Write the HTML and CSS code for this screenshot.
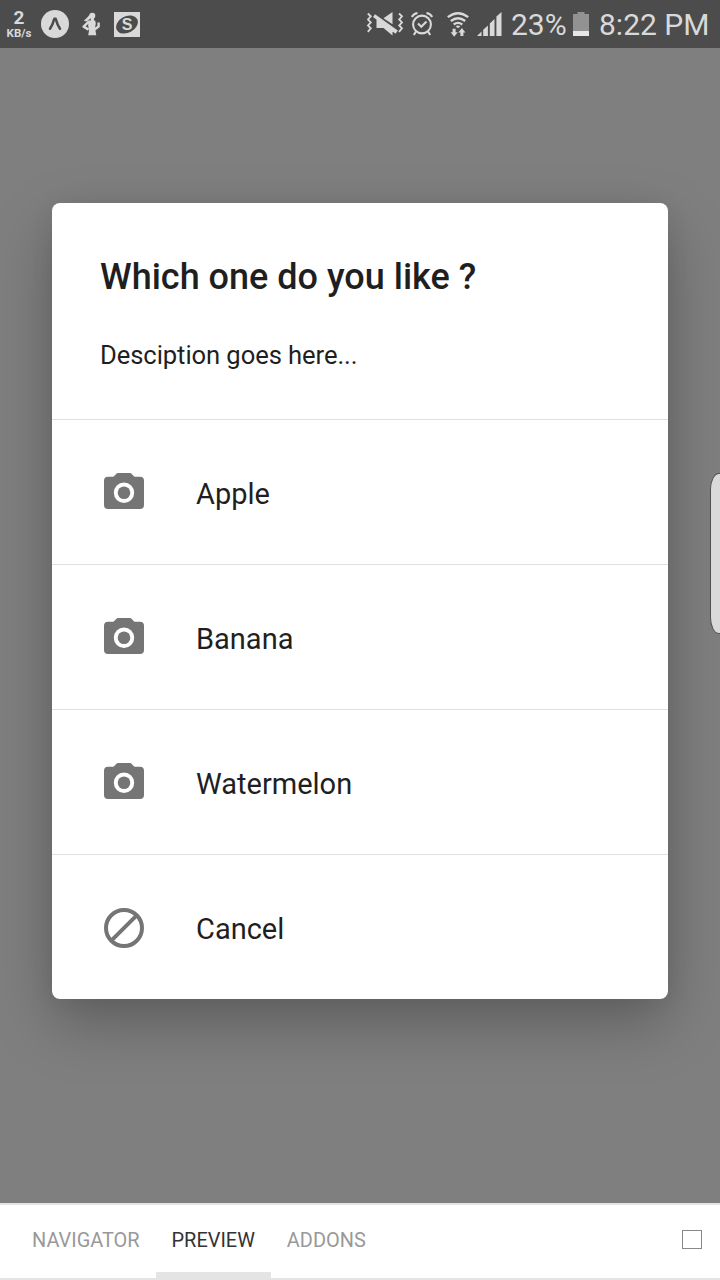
FILE: index.html
```
<!DOCTYPE html>
<html lang="en">
<head>
<meta charset="utf-8">
<title>Preview</title>
<link rel="stylesheet" href="styles.css">
</head>
<body>
<svg class="defs" aria-hidden="true">
  <symbol id="camera" viewBox="0 0 40 36">
    <path fill-rule="evenodd" d="M14 0h12c2 0 3.200 3.800 5.500 3.800H36a4 4 0 0 1 4 4V32a4 4 0 0 1-4 4H4a4 4 0 0 1-4-4V7.800a4 4 0 0 1 4-4h4.500C10.800 3.800 12 0 14 0zM20 9.600a10.200 10.200 0 1 0 0 20.400 10.200 10.200 0 0 0 0-20.400z"/>
    <circle cx="20" cy="19.800" r="6.300"/>
  </symbol>
</svg>
<div class="screen">
  <header class="status">
    <div class="status-left">
      <div class="rate"><b>2</b><span>KB/s</span></div>
      <svg class="expo" width="28" height="28" viewBox="0 0 28 28"><circle cx="14" cy="14" r="14" fill="#d9d9d9"/><path d="M9 18.800Q11.600 15 13.300 8.800H14.700Q16.400 15 19 18.800" fill="none" stroke="#4c4c4c" stroke-width="2.500" stroke-linecap="round" stroke-linejoin="round"/></svg>
      <svg class="figure" width="18" height="24" viewBox="0 0 18 24"><circle cx="10.300" cy="3.700" r="3"/><path d="M8 2.500L5 5.800 1.800 8.800 4.600 9.400 8.500 6.500zM8.800 6h3.200v3H8.800zM6.200 8.500h7l.6 3-.8 4.500 1.300 7.300H6.200l.9-5.300-.9-4z"/><path d="M6.800 9.600L1.600 14.600 6.600 17.600M12.500 17.500L16.600 14.500V10.500" fill="none" stroke="#d9d9d9" stroke-width="2.400" stroke-linejoin="round"/></svg>
      <svg class="badge-s" width="26" height="25" viewBox="0 0 26 25"><path fill="#d9d9d9" d="M0 0h26v25H0z"/><ellipse cx="13" cy="12.500" rx="11.500" ry="8.300" transform="rotate(-28 13 12.500)" fill="#4c4c4c"/><text x="13" y="18.300" text-anchor="middle" class="s-letter">S</text></svg>
    </div>
    <div class="status-right">
      <svg class="mute" width="37" height="24" viewBox="0 0 37 24"><g fill="none" stroke="#d9d9d9" stroke-width="1.800"><path d="M.8 1.500l3 2.900-2.800 3 2.800 3-2.800 3 2.800 3-3 3.500"/><path d="M32 1.500l3 2.900-2.800 3 2.800 3-2.800 3 2.800 3-3 3.500"/></g><path fill="#d9d9d9" d="M9.500 6L28 18.500 25.500 20.200V23.500L16.500 16H9.500zM16.500 6.200L25.500 0V12.200zM8 2.200L30.800 18.600 28.600 21.800 6 5z"/></svg>
      <svg class="alarm" width="22" height="24" viewBox="0 0 22 24" fill="none" stroke="#d9d9d9"><circle cx="11" cy="12.500" r="8.900" stroke-width="2.100"/><path stroke-width="2.100" d="M7 11.500l3.300 3.300 5.200-5.300M5 19.500L2.800 23M17 19.500l2.200 3.500M.8 5Q2.500 1.700 6.500 1M21.200 5Q19.500 1.700 15.500 1"/></svg>
      <svg class="wifi" width="22" height="25" viewBox="0 0 22 25"><g fill="none" stroke="#d9d9d9" stroke-width="2.300"><path d="M.8 5.200Q11-2.800 21.200 5.200M3.800 9Q11 3.400 18.200 9M6.700 12.500Q11 9.200 15.300 12.500"/></g><path fill="#d9d9d9" d="M8.600 14.200Q11 12.700 13.400 14.200L11 16.300zM5.600 16.800h3v3.400H10.700L7.200 24.700 3.700 20.200H5.600zM13.400 24v-3.500h-2L14.900 16l3.500 4.500H16.400V24z"/></svg>
      <svg class="signal" width="25" height="24" viewBox="0 0 25 24" fill="#d9d9d9"><path d="M0 24l4.500-4.500V24zM6.200 24v-6.200l4.700-4.200V24zM12.800 24V11.500l4.700-4.500v17zM19.400 24V4.400L24.500 0v24z"/></svg>
      <span class="percent">23%</span>
      <svg class="battery" width="16" height="24" viewBox="0 0 16 24"><path fill="#929292" d="M0 2h4.500V0h7v2H16v17H0z"/><path fill="#e6e6e6" d="M0 19h16v5H0z"/></svg>
      <span class="clock">8:22 PM</span>
    </div>
  </header>

  <main class="backdrop">
    <section class="dialog" role="dialog">
      <div class="heading">
        <h1>Which one do you like ?</h1>
        <p>Desciption goes here...</p>
      </div>
      <div class="option"><svg width="40" height="36"><use href="#camera"/></svg><span>Apple</span></div>
      <div class="option"><svg width="40" height="36"><use href="#camera"/></svg><span>Banana</span></div>
      <div class="option"><svg width="40" height="36"><use href="#camera"/></svg><span>Watermelon</span></div>
      <div class="option cancel"><svg width="40" height="40" viewBox="0 0 40 40" fill="none" stroke="#757575" stroke-width="4"><circle cx="20" cy="20" r="18"/><path d="M7.300 32.700L32.700 7.300"/></svg><span>Cancel</span></div>
    </section>
    <div class="edge-handle"></div>
  </main>

  <nav class="tabs">
    <a class="tab">NAVIGATOR</a>
    <a class="tab active">PREVIEW</a>
    <a class="tab">ADDONS</a>
    <span class="square"></span>
  </nav>
</div>
</body>
</html>
```
FILE: styles.css
```
* { box-sizing: border-box; }
body { margin: 0; font-family: Roboto, "Liberation Sans", sans-serif; color: #1f1f1f; }
.defs { position: absolute; width: 0; height: 0; }
.screen { width: 720px; height: 1280px; display: flex; flex-direction: column; overflow: hidden; }
svg { display: block; flex: none; }

.status { height: 48px; flex: none; background: #4c4c4c; color: #d9d9d9; display: flex; justify-content: space-between; padding: 0 10px 0 5px; }
.status-left, .status-right { display: flex; align-items: center; }
.rate { width: 28px; text-align: center; }
.rate b { display: block; font-size: 19px; line-height: 18px; font-weight: 700; }
.rate span { display: block; font-size: 11.5px; line-height: 12px; font-weight: 700; }
.expo { margin-left: 8px; }
.figure { margin-left: 13px; fill: #d9d9d9; }
.badge-s { margin-left: 14px; }
.s-letter { font: 700 16px "Liberation Sans", sans-serif; fill: #d9d9d9; }
.alarm { margin-left: 7px; }
.wifi { margin-left: 14px; }
.signal { margin-left: 8px; }
.percent, .clock { font-size: 30px; line-height: 48px; padding-top: 2px; white-space: nowrap; }
.percent { width: 56px; margin-left: 9px; }
.battery { margin-left: 6px; }
.clock { width: 111px; margin-left: 10px; }

.backdrop { position: relative; height: 1155px; flex: none; background: #7f7f7f; padding: 155px 52px 0; }
.dialog { height: 796px; background: #fff; border-radius: 8px; box-shadow: 0 24px 60px rgba(0,0,0,.26), 0 2px 24px rgba(0,0,0,.06); }
.heading { height: 216px; padding: 53px 48px 0; }
h1 { margin: 0; font-size: 36px; line-height: 42px; font-weight: 500; white-space: nowrap; }
p { margin: 42px 0 0; font-size: 25.6px; line-height: 30px; letter-spacing: -.08px; }
.option { height: 145px; border-top: 1px solid #e0e0e0; padding: 0 52px; display: flex; align-items: center; gap: 52px; font-size: 29px; }
.option svg { fill: #757575; margin-bottom: 2px; }
.option span { padding-top: 4px; }
.option.cancel svg { fill: none; margin: 2px 0 0; }
.edge-handle { position: absolute; right: -8px; top: 425px; width: 18px; height: 161px; background: #dadada; border: 1px solid #505050; border-radius: 14px / 26px; }

.tabs { height: 77px; flex: none; background: #fff; border-top: 2px solid #e4e4e4; box-shadow: inset 0 -2px #e4e4e4; display: flex; padding: 0 18px 0 16px; }
.tab { height: 75px; padding: 0 16px; font-size: 19.93px; line-height: 71px; color: #999; }
.active { color: #333; border-bottom: 8px solid #e4e4e4; }
.square { width: 20px; height: 19px; margin: 25px 0 0 auto; border: 1px solid #888; }
```
